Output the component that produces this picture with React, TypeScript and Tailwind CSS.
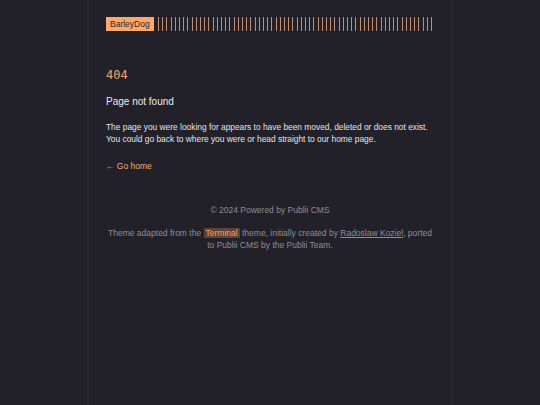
import React from 'react';

const stripes = {
  backgroundImage:
    'repeating-linear-gradient(90deg, #f2b48c 0px, #f2b48c 1px, transparent 1px, transparent 4.2px)',
};

export default function App() {
  return (
    <div className="min-h-screen bg-[#222129] font-['Liberation_Sans',Arial,sans-serif]">
      <div className="mx-auto min-h-screen w-[366px] border-x-2 border-[#28272f] px-[17px] pt-[17px]">
        {/* Header */}
        <header className="flex items-center gap-[4px]">
          <a className="flex h-[14px] items-center bg-[#ffa86a] px-[4px] text-[8.5px] text-[#2a2630]">
            BarleyDog
          </a>
          <div className="h-[14px] flex-1 opacity-75" style={stripes} />
        </header>

        {/* Content */}
        <main className="mt-[36px]">
          <h1 className="font-['DejaVu_Sans_Mono',monospace] text-[12px] leading-[16px] text-[#f0a470]">
            404
          </h1>
          <h2 className="mt-[12px] text-[10px] leading-[14px] text-[#ebebed]">Page not found</h2>
          <p className="mt-[12px] text-[8.4px] leading-[12px] text-[#e4e4e6]">
            The page you were looking for appears to have been moved, deleted or does not exist.
            <br />
            You could go back to where you were or head straight to our home page.
          </p>
          <a className="mt-[15px] block text-[8.5px] leading-[12px] text-[#f4a877]">← Go home</a>
        </main>

        {/* Footer */}
        <footer className="mt-[32px] text-center text-[8.5px] leading-[12px] text-[#8f8e95]">
          <p>© 2024 Powered by Publii CMS</p>
          <p className="mt-[11px]">
            Theme adapted from the <span className="bg-[#5f4433] px-[2px] text-[#eba57a]">Terminal</span>{' '}
            theme, initially created by <span className="underline">Radoslaw Koziel</span>, ported to
            Publii CMS by the Publii Team.
          </p>
        </footer>
      </div>
    </div>
  );
}
